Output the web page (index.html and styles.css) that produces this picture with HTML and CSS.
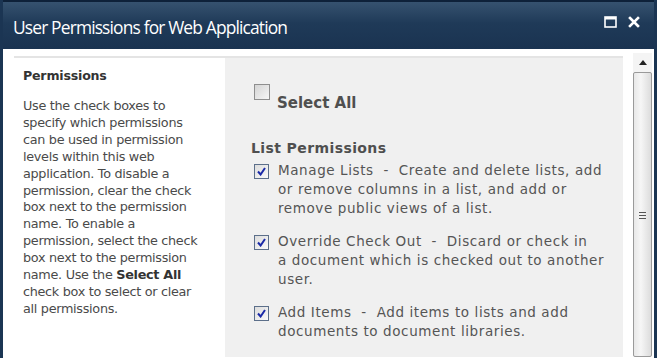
FILE: index.html
```html
<!DOCTYPE html>
<html lang="en">
<head>
    <meta charset="UTF-8">
    <title>User Permissions for Web Application</title>
    <link rel="stylesheet" href="styles.css">
</head>
<body>
    <div class="dialog">
        <div class="titlebar">
            <span class="title">User Permissions for Web Application</span>
            <div class="controls">
                <!-- maximize -->
                <svg width="13" height="12" viewBox="0 0 13 12"><rect x="1" y="1" width="11" height="10" fill="none" stroke="#fff" stroke-width="1.6"/><rect x="1" y="1" width="11" height="2.5" fill="#fff"/></svg>
                <!-- close -->
                <svg width="12" height="12" viewBox="0 0 12 12"><path d="M2 2 L10 10 M10 2 L2 10" stroke="#fff" stroke-width="2.6" stroke-linecap="square"/></svg>
            </div>
        </div>

        <div class="body">
            <div class="content">
                <div class="section">
                    <div class="desc">
                        <h3>Permissions</h3>
                        <p>Use the check boxes to<br>specify which permissions<br>can be used in permission<br>levels within this web<br>application. To disable a<br>permission, clear the check<br>box next to the permission<br>name. To enable a<br>permission, select the check<br>box next to the permission<br>name. Use the <b>Select All</b><br>check box to select or clear<br>all permissions.</p>
                    </div>
                    <div class="fields">
                        <div class="select-all">
                            <span class="box"></span>
                            <span class="select-label">Select All</span>
                        </div>
                        <h4>List Permissions</h4>
                        <div class="perm">
                            <span class="box checked"><svg width="9" height="9" viewBox="0 0 9 9"><path d="M1 4.5 L3.6 7.5 L8 1" fill="none" stroke="#1b2aa8" stroke-width="2"/></svg></span>
                            <span class="perm-text">Manage Lists&nbsp; -&nbsp; Create and delete lists, add<br>or remove columns in a list, and add or<br>remove public views of a list.</span>
                        </div>
                        <div class="perm">
                            <span class="box checked"><svg width="9" height="9" viewBox="0 0 9 9"><path d="M1 4.5 L3.6 7.5 L8 1" fill="none" stroke="#1b2aa8" stroke-width="2"/></svg></span>
                            <span class="perm-text">Override Check Out&nbsp; -&nbsp; Discard or check in<br>a document which is checked out to another<br>user.</span>
                        </div>
                        <div class="perm">
                            <span class="box checked"><svg width="9" height="9" viewBox="0 0 9 9"><path d="M1 4.5 L3.6 7.5 L8 1" fill="none" stroke="#1b2aa8" stroke-width="2"/></svg></span>
                            <span class="perm-text">Add Items&nbsp; -&nbsp; Add items to lists and add<br>documents to document libraries.</span>
                        </div>
                    </div>
                </div>
            </div>

            <div class="scrollbar">
                <div class="arrow">
                    <svg width="8" height="5" viewBox="0 0 8 5"><path d="M0 5 L4 0 L8 5 Z" fill="#222"/></svg>
                </div>
                <div class="thumb">
                    <span class="grip"></span>
                </div>
            </div>
        </div>
    </div>
</body>
</html>
```

FILE: styles.css
```css
body {
    margin: 0;
    padding: 0;
    background-color: #fff;
}

.dialog {
    width: 657px;
    height: 358px;
    box-sizing: border-box;
    border-left: 3px solid #1b3553;
    border-right: 3px solid #1b3553;
    display: flex;
    flex-direction: column;
    overflow: hidden;
    background-color: #fff;
}

.titlebar {
    height: 49px;
    flex-shrink: 0;
    box-sizing: border-box;
    border-top: 2px solid #0e2139;
    background: linear-gradient(#36526f, #1f3a58 45%, #1a3351);
    display: flex;
    align-items: center;
    justify-content: space-between;
    padding: 2px 14px 0 10px;
}

.title {
    font-family: "Open Sans", sans-serif;
    font-size: 17.4px;
    color: #fff;
    letter-spacing: -0.85px;
}

.controls {
    display: flex;
    gap: 11px;
    align-items: center;
    margin-top: -9px;
}

.body {
    flex: 1;
    display: flex;
    min-height: 0;
}

.content {
    flex: 1;
    padding: 7px 10px 4px 11px;
    display: flex;
}

.section {
    flex: 1;
    display: grid;
    grid-template-columns: 211px 1fr;
    border-top: 2px solid #e4e4e4;
}

.desc {
    padding: 10px 8px 0 9px;
    font-family: "DejaVu Sans", sans-serif;
    font-size: 12.8px;
    color: #4a4a4a;
    letter-spacing: -0.3px;
    white-space: nowrap;
}

.desc h3 {
    margin: 0 0 15px;
    font-size: 12.6px;
    color: #333;
    letter-spacing: -0.2px;
}

.desc p {
    margin: 0;
    line-height: 16.9px;
}

.desc b {
    color: #333;
}

.fields {
    background-color: #f0f0f0;
    padding: 26px 10px 0 29px;
    font-family: "DejaVu Sans", sans-serif;
    color: #555;
    white-space: nowrap;
}

.select-all {
    display: flex;
    align-items: flex-start;
    gap: 7px;
}

.select-label {
    font-weight: bold;
    font-size: 15px;
    margin-top: 10px;
    color: #4f4f4f;
}

.fields h4 {
    margin: 28px 0 7px -3px;
    font-size: 14px;
    letter-spacing: 0.4px;
    color: #4f4f4f;
}

.box {
    width: 13px;
    height: 13px;
    flex-shrink: 0;
    border: 1px solid #8e8e8e;
    background: linear-gradient(135deg, #d4d4d4, #f6f6f6);
    display: flex;
    align-items: center;
    justify-content: center;
    margin-top: 1px;
}

.select-all .box {
    width: 14px;
    height: 14px;
    margin-top: 0;
}

.box.checked {
    border-color: #5c6f8a;
    background: linear-gradient(135deg, #dcdcdc, #fafafa);
}

.perm {
    display: flex;
    align-items: flex-start;
    gap: 9px;
    margin-bottom: 16px;
}

.perm-text {
    font-size: 13.5px;
    line-height: 19px;
    margin-top: -2px;
    letter-spacing: 0.6px;
}

.scrollbar {
    width: 19px;
    flex-shrink: 0;
    margin: 4px 2px 1px 0;
    display: flex;
    flex-direction: column;
    background: #f4f4f4;
}

.arrow {
    height: 19px;
    display: flex;
    align-items: center;
    justify-content: center;
}

.thumb {
    flex: 1;
    border: 1px solid #9a9a9a;
    border-radius: 2px;
    background: linear-gradient(90deg, #e8e8e8, #f6f6f6 40%, #dcdcdc);
    display: flex;
    align-items: center;
    justify-content: center;
}

.grip {
    width: 7px;
    height: 7px;
    background: repeating-linear-gradient(#555 0 1px, transparent 1px 3px);
    margin-top: 2px;
}
```
